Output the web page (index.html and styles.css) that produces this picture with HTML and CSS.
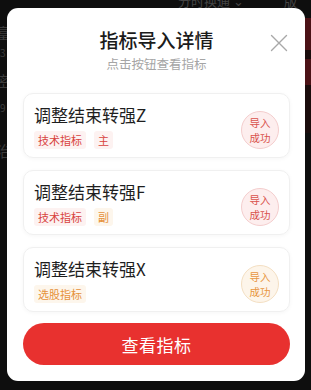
FILE: index.html
```html
<!DOCTYPE html>
<html lang="zh-CN">
<head>
<meta charset="utf-8">
<title>指标导入详情</title>
<link rel="stylesheet" href="styles.css">
</head>
<body>
<div class="backdrop" aria-hidden="true">
  <div class="bg-top">分时换通 ⌄<span class="bg-top-r">版</span></div>
  <div class="bg-left">
    <span class="g1">富</span>
    <span class="g2">3</span>
    <span class="g3">密</span>
    <span class="g4">9</span>
    <span class="g5">治</span>
  </div>
  <div class="bg-right"></div>
</div>

<div class="modal">
  <button class="close" aria-label="关闭">
    <svg width="18" height="18" viewBox="0 0 18 18"><path d="M1.5 1.5 L16.5 16.5 M16.5 1.5 L1.5 16.5" stroke="#a8a8a8" stroke-width="1.4" fill="none" stroke-linecap="round"/></svg>
  </button>
  <div class="head">
    <div class="title">指标导入详情</div>
    <div class="subtitle">点击按钮查看指标</div>
  </div>

  <div class="list">
    <div class="card">
      <div class="info">
        <div class="name">调整结束转强Z</div>
        <div class="tags">
          <span class="tag red">技术指标</span>
          <span class="tag red">主</span>
        </div>
      </div>
      <div class="badge red"><span>导入</span><span>成功</span></div>
    </div>

    <div class="card">
      <div class="info">
        <div class="name">调整结束转强F</div>
        <div class="tags">
          <span class="tag red">技术指标</span>
          <span class="tag orange">副</span>
        </div>
      </div>
      <div class="badge red"><span>导入</span><span>成功</span></div>
    </div>

    <div class="card">
      <div class="info">
        <div class="name">调整结束转强X</div>
        <div class="tags">
          <span class="tag orange">选股指标</span>
        </div>
      </div>
      <div class="badge orange"><span>导入</span><span>成功</span></div>
    </div>
  </div>

  <button class="cta">查看指标</button>
</div>
</body>
</html>
```

FILE: styles.css
```css
* { box-sizing: border-box; }

html, body {
  margin: 0;
  padding: 0;
}

body {
  width: 311px;
  height: 390px;
  overflow: hidden;
  background: #0e0e0e;
  font-family: "Noto Sans CJK SC", "Noto Sans", sans-serif;
  position: relative;
  padding-top: 8px;
  padding-left: 7px;
}

/* dimmed app content behind the overlay */
.backdrop {
  position: absolute;
  inset: 0;
  z-index: 0;
  color: #3a3a3a;
}
.bg-top {
  position: absolute;
  top: -9px;
  left: 178px;
  font-size: 13px;
  color: #444;
  white-space: nowrap;
}
.bg-top-r {
  margin-left: 40px;
}
.bg-left span {
  position: absolute;
  left: -4px;
  font-size: 15px;
  color: #3c3c3c;
}
.bg-left .g1 { top: 22px; }
.bg-left .g2 { top: 45px; font-size: 10px; left: 0; }
.bg-left .g3 { top: 70px; }
.bg-left .g4 { top: 100px; font-size: 10px; left: 0; }
.bg-left .g5 { top: 140px; }
.bg-right {
  position: absolute;
  left: 305px;
  top: 18px;
  width: 6px;
  height: 115px;
  background: linear-gradient(#4b1216 0 28%, #1a0c0c 28% 36%, #4b1216 36% 58%, #1a0c0c 58%);
}

.modal {
  position: relative;
  z-index: 1;
  width: 298px;
  height: 373px;
  background: #fff;
  border-radius: 11px;
  padding: 19px 15px 16px 16px;
  display: flex;
  flex-direction: column;
}

.close {
  position: absolute;
  top: 26px;
  right: 17px;
  width: 18px;
  height: 18px;
  padding: 0;
  border: 0;
  background: none;
  display: flex;
}

.head {
  display: flex;
  flex-direction: column;
  align-items: center;
}
.title {
  font-size: 19px;
  line-height: 26px;
  font-weight: 500;
  color: #1b1b1b;
}
.subtitle {
  margin-top: 2px;
  font-size: 12.5px;
  line-height: 18px;
  color: #a5a5a5;
}

.list {
  margin-top: 20px;
  display: flex;
  flex-direction: column;
  gap: 12px;
}

.card {
  height: 65px;
  border: 1px solid #f0f0f0;
  border-radius: 10px;
  box-shadow: 0 1px 4px rgba(0, 0, 0, 0.04);
  padding: 9px 10px 0 10px;
  display: flex;
  align-items: center;
}

.info {
  flex: 1;
  align-self: flex-start;
  display: flex;
  flex-direction: column;
}
.name {
  font-size: 17px;
  line-height: 24px;
  color: #1e1e1e;
}
.tags {
  margin-top: 4px;
  display: flex;
  gap: 8px;
}
.tag {
  font-size: 11px;
  line-height: 18px;
  height: 18px;
  padding: 0 4px;
  border-radius: 3px;
}
.tag.red {
  color: #d8433e;
  background: #fdf2f1;
}
.tag.orange {
  color: #e6913a;
  background: #fdf6ec;
}

.badge {
  width: 38px;
  height: 38px;
  border-radius: 50%;
  display: flex;
  flex-direction: column;
  align-items: center;
  justify-content: center;
  font-size: 10.5px;
  line-height: 15px;
}
.badge span {
  display: block;
  height: 15px;
}
.badge.red {
  color: #d9524c;
  background: #fdeeee;
  border: 1px solid #f4cdcd;
}
.badge.orange {
  color: #e8963f;
  background: #fdf5ea;
  border: 1px solid #f4dfc2;
}

.cta {
  margin-top: 11px;
  height: 43px;
  border: 0;
  border-radius: 22px;
  background: #e8312f;
  color: #fff;
  font-family: "Noto Sans CJK SC", "Noto Sans", sans-serif;
  font-size: 17px;
  letter-spacing: 0.5px;
}
```
